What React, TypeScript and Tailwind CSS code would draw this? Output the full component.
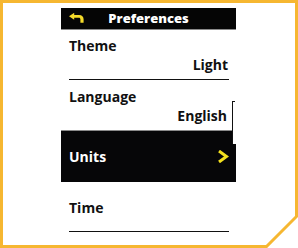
import React from "react";

const font = { fontFamily: '"Open Sans", "DejaVu Sans", sans-serif' };

export default function App() {
  return (
    <div className="relative w-[298px] h-[248px] bg-white overflow-hidden" style={font}>
      <svg className="absolute left-0 top-0" width="298" height="248" viewBox="0 0 298 248">
        <polygon
          points="1.5,1.5 296.5,1.5 296.5,216.5 266.5,246.5 1.5,246.5"
          fill="none"
          stroke="#F6B731"
          strokeWidth="3"
        />
      </svg>
      <div className="relative ml-[61px] pt-[8px] w-[175px]">
        {/* header */}
        <div className="h-[21px] bg-[#050505] relative flex items-center justify-center">
          <svg className="absolute left-[8px] top-[5px]" width="15" height="10" viewBox="0 0 15 10">
            <path
              d="M0 3.3 L5.2 -0.2 L5.2 1.9 L10 1.9 C13 1.9 14.6 3.6 14.6 6.2 L14.6 9.8 L11.4 9.8 L11.4 6.6 C11.4 5.4 10.9 4.8 9.8 4.8 L5.2 4.8 L5.2 6.8 Z"
              fill="#F4DA2A"
            />
          </svg>
          <span className="text-white font-extrabold text-[13px] leading-[19px]">Preferences</span>
        </div>
        <div className="h-px bg-[#8a8a8a]" />
        {/* Theme */}
        <div className="h-[51px] flex flex-col">
          <div className="pl-[8px] pt-[6px] text-[14px] leading-[19px] font-bold text-[#111]">Theme</div>
          <div className="pr-[8px] text-right text-[14px] leading-[19px] font-bold text-[#111]">Light</div>
          <div className="mt-auto mb-[1px] ml-[8px] w-[160px] h-[1.5px] bg-[#111]" />
        </div>
        {/* Language */}
        <div className="h-[49px] flex flex-col">
          <div className="pl-[8px] pt-[6px] text-[14px] leading-[19px] font-bold text-[#111]">Language</div>
          <div className="pr-[9px] text-right text-[14px] leading-[19px] font-bold text-[#111]">English</div>
        </div>
        <div className="h-px bg-[#8a8a8a]" />
        {/* Units */}
        <div className="h-[51px] bg-[#060608] flex items-center justify-between pl-[8px] pr-[7px]">
          <span className="text-white font-bold text-[14px] leading-[19px]">Units</span>
          <svg width="12" height="13" viewBox="0 0 12 13">
            <path d="M2 1 L9.5 6.5 L2 12" fill="none" stroke="#F2E01E" strokeWidth="3" />
          </svg>
        </div>
        {/* Time */}
        <div className="h-[51px] flex flex-col">
          <div className="pl-[8px] pt-[16px] text-[14px] leading-[19px] font-bold text-[#111]">Time</div>
          <div className="mt-auto mb-[1px] ml-[8px] w-[160px] h-[1.5px] bg-[#111]" />
        </div>
        {/* scroll indicator */}
        <div className="absolute left-[171px] top-[101px] w-[5px] h-[43px] bg-white border-l border-[#111]">
          <div className="w-[2px] h-px bg-[#111]" />
        </div>
      </div>
    </div>
  );
}
